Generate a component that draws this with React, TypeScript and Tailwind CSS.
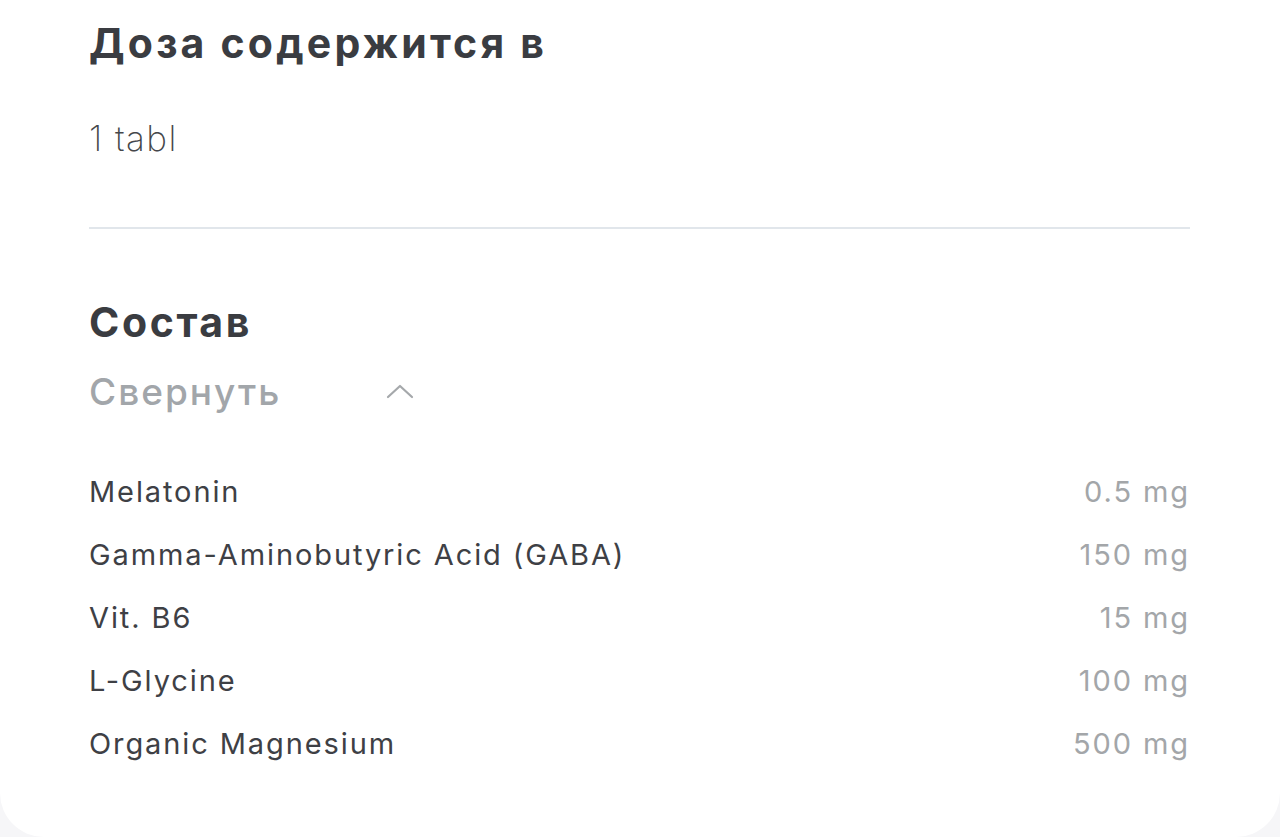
const items = [
  { name: 'Melatonin', dose: '0.5 mg' },
  { name: 'Gamma-Aminobutyric Acid (GABA)', dose: '150 mg' },
  { name: 'Vit. B6', dose: '15 mg' },
  { name: 'L-Glycine', dose: '100 mg' },
  { name: 'Organic Magnesium', dose: '500 mg' },
];

export default function App() {
  return (
    <div className="min-h-[837px] bg-[#f6f6f8] font-['Inter',sans-serif]">
      <div className="h-[837px] rounded-b-[44px] bg-white px-[89px] pt-[19px]">
        <h2 className="text-[41px] leading-[48px] font-bold tracking-[3.2px] text-[#3a3c41]">
          Доза содержится в
        </h2>
        <p className="mt-[51px] text-[35px] leading-[40px] font-extralight tracking-[1.4px] text-[#45474b]">1 tabl</p>

        <div className="mt-[69px] h-[2px] w-[1101px] bg-[#e1e6eb]" />

        <h2 className="mt-[69px] text-[41px] leading-[48px] font-bold tracking-[2.6px] text-[#3a3c41]">
          Состав
        </h2>
        <button className="mt-[24px] flex h-[44px] items-center text-[37px] leading-[44px] font-medium tracking-[2px] text-[#a2a6aa]">
          <span className="w-[297px] text-left">Свернуть</span>
          <svg width="28" height="16" viewBox="0 0 28 16" fill="none" className="mt-[-2px]">
            <path d="M2 14 L14 3 L26 14" stroke="#a5a8ab" strokeWidth="2.2" strokeLinecap="round" strokeLinejoin="round" />
          </svg>
        </button>

        <ul className="mt-[46px] w-[1101px]">
          {items.map((it) => (
            <li key={it.name} className="flex h-[63px] items-center justify-between text-[29px] tracking-[1.9px]">
              <span className="text-[#3e4045]">{it.name}</span>
              <span className="text-[#a3a6a9]">{it.dose}</span>
            </li>
          ))}
        </ul>
      </div>
    </div>
  );
}
